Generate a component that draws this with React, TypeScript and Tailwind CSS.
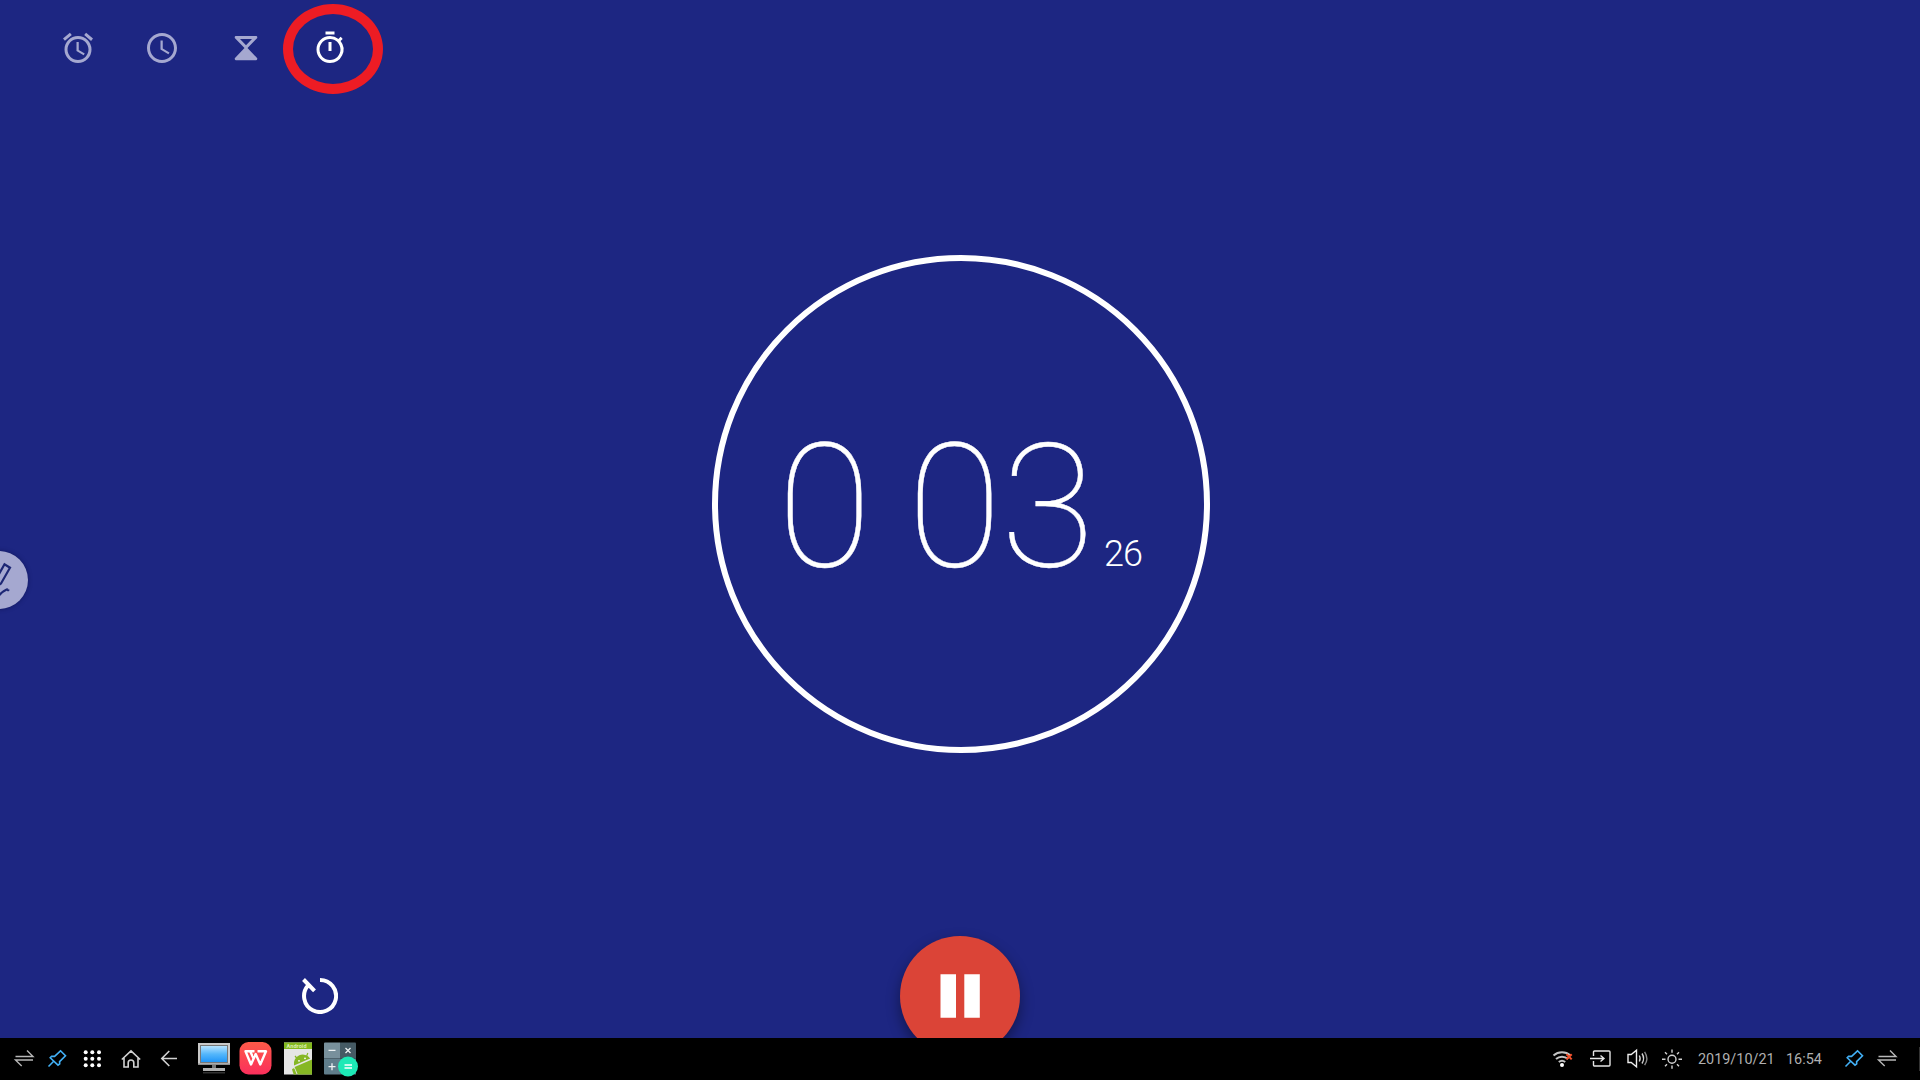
import type { ReactNode } from "react";

function Tab({ active = false, children }: { active?: boolean; children: ReactNode }) {
  return (
    <button className={`relative flex h-24 w-21 items-center justify-center ${active ? "text-white" : "text-[#a5a8d0]"}`}>
      <svg viewBox="0 0 24 24" className="size-9" fill="currentColor">
        {children}
      </svg>
      {active && (
        <span className="absolute top-1 left-[-5px] h-[90px] w-[100px] rounded-[50%] border-10 border-[#ed1c24]" />
      )}
    </button>
  );
}

function Glyph({ className = "", children }: { className?: string; children: ReactNode }) {
  return (
    <svg
      viewBox="0 0 24 24"
      className={`size-6 shrink-0 ${className}`}
      fill="none"
      stroke="currentColor"
      strokeWidth="1.4"
    >
      {children}
    </svg>
  );
}

function Swap({ className }: { className: string }) {
  return (
    <Glyph className={className}>
      <path d="M3.5 9.5H21L15 3.5M21 13H3.5l6.2 6" />
    </Glyph>
  );
}

function Pin({ className }: { className: string }) {
  return (
    <Glyph className={className}>
      <path strokeWidth="1.600" d="M3.5 19.5l5.2-5.2M15.5 3.8l5 5L14.6 14.6l.1 2.2-1.7 1.4L5.2 10.8 6.6 9.2l3 .2z" />
    </Glyph>
  );
}

function Monitor() {
  return (
    <svg viewBox="0 0 36 36" className="ml-[15px] size-9 shrink-0">
      <defs>
        <linearGradient id="screen" x1="0" y1="0" x2="0" y2="1">
          <stop offset="0" stopColor="#b5e2ff" />
          <stop offset="0.5" stopColor="#55b7fb" />
          <stop offset="1" stopColor="#2196f8" />
        </linearGradient>
      </defs>
      <path d="M2 2h32v22H2z" fill="#c9c9c9" />
      <path d="M2 22.500h32V24H2z" fill="#8f8f8f" />
      <path d="M4 4h28v18H4z" fill="#777" />
      <path d="M5 5h26v16H5z" fill="url(#screen)" />
      <path d="M16 24h4v3.500h-4z" fill="#777" />
      <path d="M7 27h22v3H7z" fill="#b0b0b0" />
      <path d="M7 31h22v1.500H7z" fill="#333" />
    </svg>
  );
}

function Writer() {
  return (
    <svg viewBox="0 0 36 36" className="ml-1.5 size-9 shrink-0">
      <defs>
        <linearGradient id="writer" x1="0" y1="0" x2="0" y2="1">
          <stop offset="0" stopColor="#fd5a48" />
          <stop offset="1" stopColor="#fb2f5c" />
        </linearGradient>
      </defs>
      <rect x="1.500" y="1" width="32" height="32.500" rx="9" fill="url(#writer)" />
      <path
        d="M16.500 10.300H7.500L13 23.500 17.700 13 22.300 23.500 28 10.300H19.500M12.300 10.500l3.200 7"
        fill="none"
        stroke="#fff"
        strokeWidth="2.400"
        strokeLinejoin="round"
      />
    </svg>
  );
}

function AndroidFile() {
  return (
    <svg viewBox="0 0 36 36" className="ml-1.5 size-9 shrink-0">
      <path d="M4 1.500h28v32H4z" fill="#e6e6e6" />
      <path d="M4 1.500h28v6.500H4z" fill="#83b81e" />
      <text x="6.500" y="7.400" fill="#d9ecb0" fontSize="5.500" fontWeight="700" fontFamily="Roboto, sans-serif" textLength="20">
        Android
      </text>
      <g fill="#86b724">
        <path d="M14 24.500a9 9 0 0 1 16.200-7z" />
        <path d="M14.600 26l17.400-7.500v15H17.800z" />
        <path d="M12 28.500a1.500 1.500 0 0 1 2.500-.7l2.200 5.700h-3z" />
      </g>
      <path d="M17.500 18l-2.500-3M26.500 15.500l1.300-3.500" stroke="#86b724" strokeWidth="1.200" />
      <circle cx="19" cy="19.800" r="0.900" fill="#fff" />
      <circle cx="25" cy="17.300" r="0.900" fill="#fff" />
    </svg>
  );
}

function Calculator() {
  return (
    <svg viewBox="0 0 36 36" className="ml-[7px] size-9 shrink-0">
      <path d="M1 2.500a1 1 0 0 1 1-1h15v16H1z" fill="#78909c" />
      <path d="M17 1.500h15a1 1 0 0 1 1 1v15H17z" fill="#455a64" />
      <path d="M1 17.500h16v16H2a1 1 0 0 1-1-1z" fill="#607d8b" />
      <path d="M17 17.500h16v16H17z" fill="#546e7a" />
      <path d="M5.500 9.300h7M5.500 25.700h7M9 22.200v7M22.500 7l5 5M27.500 7l-5 5" stroke="#eef2f4" strokeWidth="1.300" />
      <circle cx="25" cy="25.500" r="10" fill="#1de9b6" />
      <path d="M21.500 24h7.500M21.500 27h7.500" stroke="#fff" strokeWidth="1.400" />
    </svg>
  );
}

function Taskbar() {
  return (
    <footer className="flex h-[42px] shrink-0 items-center bg-black pl-3 text-[#d2d2d2]">
      <Swap className="text-[#b8b8b8]" />
      <Pin className="ml-[9px] text-[#42b0f5]" />
      <Glyph className="ml-[11px] text-white">
        <g fill="currentColor" stroke="none">
          {[5.7, 12.3, 19].map((x) => [5.2, 11.7, 18.2].map((y) => <circle key={`${x}-${y}`} cx={x} cy={y} r="2" />))}
        </g>
      </Glyph>
      <Glyph className="ml-[15px]">
        <path strokeWidth="1.600" d="M2.800 12.500 12 3.800l9.200 8.700M5 11v9h4.200v-4.200a2.800 2.800 0 0 1 5.600 0V20H19v-9" />
      </Glyph>
      <Glyph className="ml-3.5">
        <path strokeWidth="1.600" d="M20 11.500H5M12.300 4 4.800 11.500 12.300 19" />
      </Glyph>
      <Monitor />
      <Writer />
      <AndroidFile />
      <Calculator />

      <Glyph className="ml-auto">
        <path strokeWidth="2" stroke="#c4c4c4" d="M2.500 8.500a13 13 0 0 1 17 0M5 12a9 9 0 0 1 12 0M7.800 15a5 5 0 0 1 6.400 0" />
        <circle cx="11" cy="18" r="2" fill="#fff" stroke="none" />
        <path d="M15.500 7.200l5.200 5.200M20.700 7.200l-5.200 5.200" stroke="#f4512c" strokeWidth="2" />
      </Glyph>
      <Glyph className="ml-3.5 text-[#e6e6e6]">
        <path d="M4.500 9V5a1 1 0 0 1 1-1H20a1 1 0 0 1 1 1v13a1 1 0 0 1-1 1H5.500a1 1 0 0 1-1-1v-4M1 11.500h13.500M11.500 8.500l3.500 3-3.500 3" />
      </Glyph>
      <Glyph className="ml-[13px]">
        <path stroke="#eee" d="M2 7.500h3.200l5.300-4.300v16.600L5.200 15.500H2z" />
        <path d="M13.300 8.500q1.700 3 0 6M16 6.500q3.200 5 0 10" />
        <path stroke="#8a8a8a" d="M18.600 4.800q4.500 6.700 0 13.400" />
      </Glyph>
      <Glyph className="ml-2.5">
        <circle cx="12" cy="12.300" r="4" />
        <path d="M12 2.500v3.300M12 18.500v3.300M2 12.300h3.500M18.500 12.300H22M5 5.300l2 2M17 17.300l2 2M19 5.300l-2 2M7 17.300l-2 2" />
      </Glyph>
      <time className="ml-3.5 w-[88px] pt-0.5 font-[Roboto,sans-serif] text-[14.4px] whitespace-nowrap text-[#b0b0b0]">2019/10/21</time>
      <time className="w-[37px] pt-0.5 font-[Roboto,sans-serif] text-[14.4px] whitespace-nowrap text-[#b0b0b0]">16:54</time>
      <Pin className="ml-[19px] text-[#42b0f5]" />
      <Swap className="ml-[9px] text-[#b8b8b8]" />
      <span className="ml-5 h-6 w-px bg-[#333]" />
    </footer>
  );
}

export default function App() {
  return (
    <div className="flex h-[1080px] w-[1920px] flex-col overflow-hidden bg-[#1d2682] font-[Roboto,sans-serif] text-white">
      <main className="relative flex flex-1 flex-col overflow-hidden">
        <nav className="flex h-24 shrink-0 pl-9">
          <Tab>
            <path d="M22 5.720l-4.600-3.860-1.290 1.530 4.600 3.860L22 5.720zM7.880 3.390L6.600 1.860 2 5.710l1.290 1.530 4.590-3.850zM12.500 8H11v6l4.750 2.850.75-1.230-4-2.370V8zM12 4c-4.970 0-9 4.030-9 9s4.020 9 9 9a9 9 0 0 0 0-18zm0 16c-3.870 0-7-3.130-7-7s3.130-7 7-7 7 3.130 7 7-3.130 7-7 7z" />
          </Tab>
          <Tab>
            <path d="M11.990 2C6.470 2 2 6.480 2 12s4.470 10 9.990 10C17.520 22 22 17.520 22 12S17.520 2 11.990 2zM12 20c-4.420 0-8-3.580-8-8s3.580-8 8-8 8 3.580 8 8-3.580 8-8 8zm.5-13H11v6l5.250 3.150.75-1.230-4.500-2.670z" />
          </Tab>
          <Tab>
            <path
              fillRule="evenodd"
              d="M5.200 4h13.600a.7.700 0 0 1 .7.700V5.300L13 12l6.500 6.800v.6a.7.700 0 0 1-.7.700H5.200a.7.700 0 0 1-.7-.7v-.6L11 12 4.500 5.300V4.700a.7.700 0 0 1 .7-.7zM8 6l4 4.200L16 6z"
            />
          </Tab>
          <Tab active>
            <path d="M15 1H9v2h6V1zm-4 13h2V8h-2v6zm8.030-6.610l1.420-1.420c-.43-.51-.9-.99-1.410-1.410l-1.420 1.420A8.962 8.962 0 0 0 12 4c-4.970 0-9 4.030-9 9s4.020 9 9 9a8.994 8.994 0 0 0 7.030-14.610zM12 20c-3.870 0-7-3.130-7-7s3.130-7 7-7 7 3.130 7 7-3.130 7-7 7z" />
          </Tab>
        </nav>

        <section className="mt-[159px] ml-0.5 flex size-[498px] shrink-0 items-baseline self-center rounded-full border-6 border-white pt-[160px] pl-[59.5px] leading-none">
          <span className="w-[130px] text-[172px] font-thin [-webkit-text-stroke:0.4px_white]">0</span>
          <span className="w-[196.5px] text-[172px] font-thin tracking-[-1px] [-webkit-text-stroke:0.4px_white]">03</span>
          <span className="text-[36px] font-light tracking-[-1px]">26</span>
        </section>

        <div className="mt-[183px] grid h-[120px] shrink-0 grid-cols-3">
          <button className="flex items-center justify-center">
            <svg viewBox="0 0 36 36" className="size-9" fill="none" stroke="#fff" strokeWidth="4">
              <path d="M18 2a16 16 0 1 1-12 5.500M1.500 1.500l11 11.300" />
            </svg>
          </button>
          <button className="flex size-[120px] items-center justify-center justify-self-center rounded-full bg-[#db4437] shadow-[0_6px_14px_rgba(0,0,0,0.4)]">
            <svg viewBox="0 0 40 44" className="h-11 w-10" fill="#fff">
              <path d="M.5.300H16v43.400H.5zM24.300.300h15.500v43.400H24.300z" />
            </svg>
          </button>
        </div>

        <button className="absolute top-[551px] left-[-30px] size-[58px] rounded-full bg-[#a5a8d0] shadow-[0_0_4px_rgba(10,15,70,0.6)]">
          <svg viewBox="0 0 58 58" className="size-full" fill="none" stroke="#1d2775" strokeWidth="2.200">
            <path d="M27 26.500l7.500-13.300 5.500 3.500-9 15.800-5 3M29 44.500c4-4.500 6.500-5.500 7.700-6s1.300 2 2 0" />
          </svg>
        </button>
      </main>
      <Taskbar />
    </div>
  );
}
